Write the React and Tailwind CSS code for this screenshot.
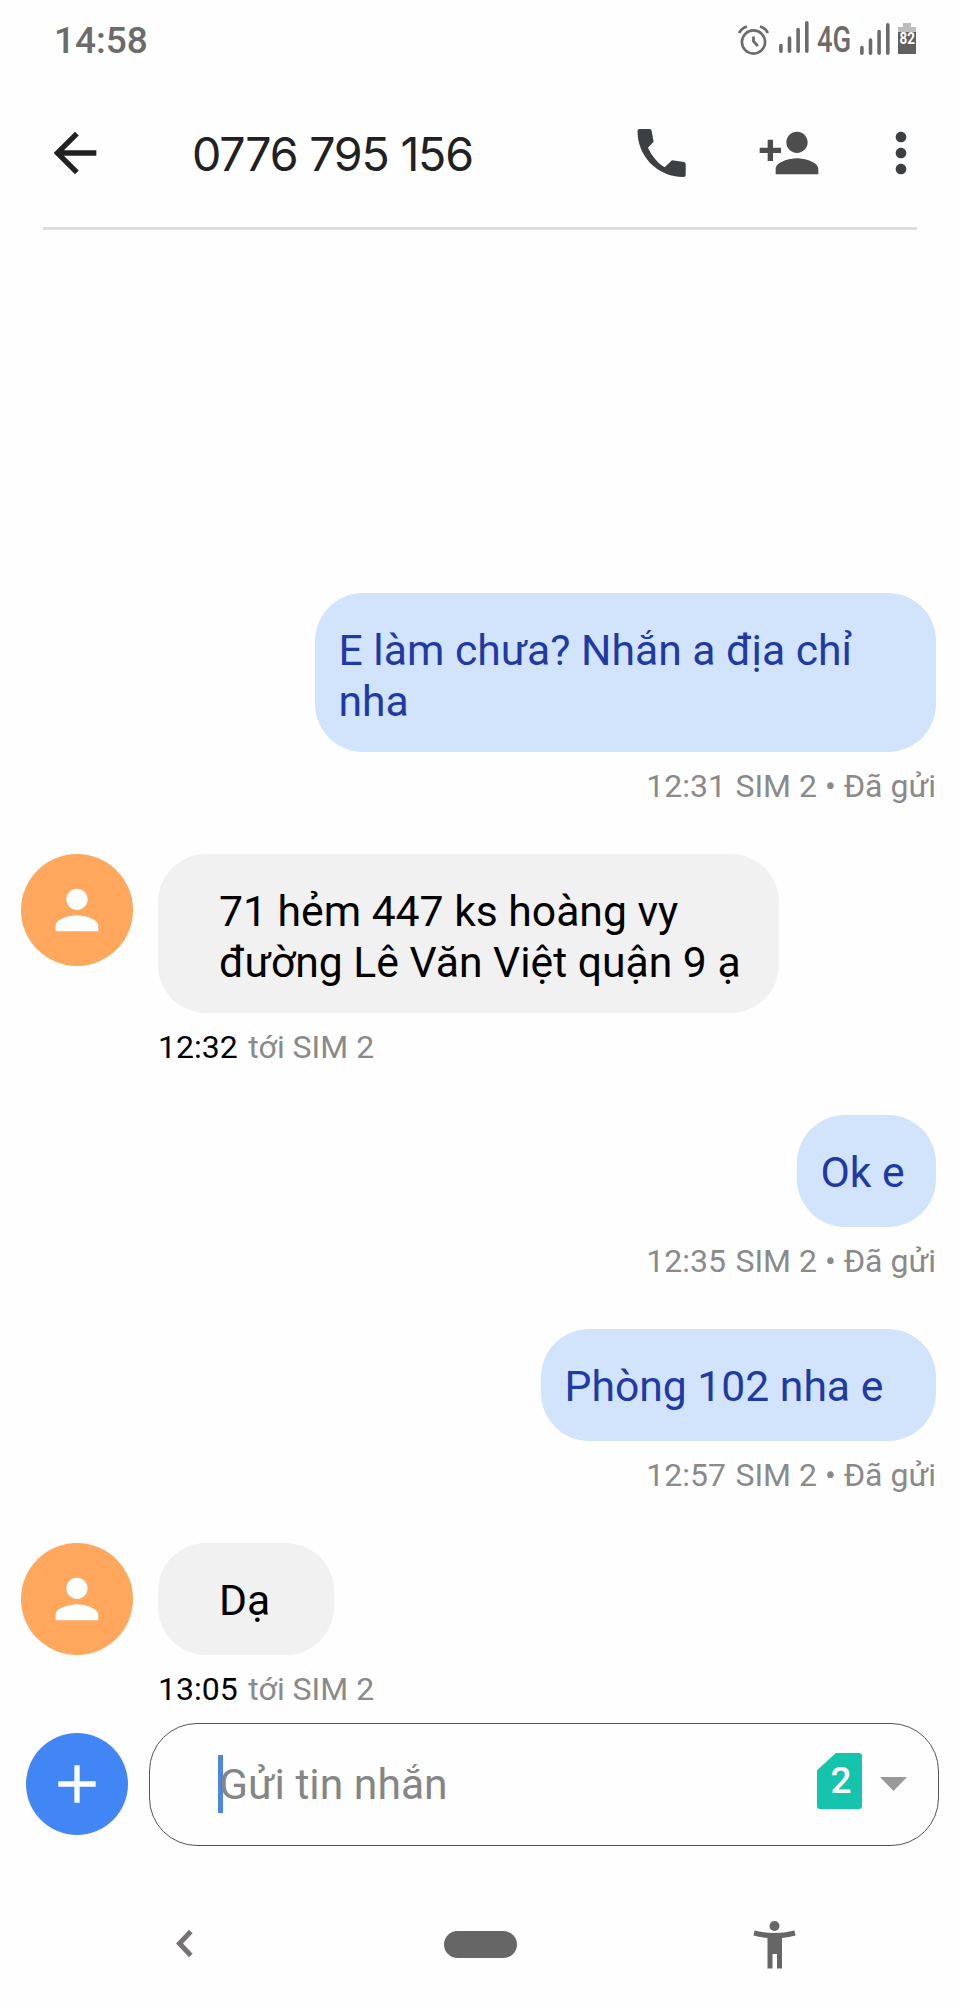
import { useState } from "react";
import { MdAdd, MdArrowBack, MdMoreVert, MdPerson, MdPersonAdd } from "react-icons/md";

const messages = [
  { id: 1, sent: true, lines: ["E làm chưa? Nhắn a địa chỉ", "nha"], time: "12:31", box: "w-[621px] h-[159px]" },
  { id: 2, sent: false, lines: ["71 hẻm 447 ks hoàng vy", "đường Lê Văn Việt quận 9 ạ"], time: "12:32", box: "w-[621px] h-[159px]" },
  { id: 3, sent: true, lines: ["Ok e"], time: "12:35", box: "w-[139px] h-28" },
  { id: 4, sent: true, lines: ["Phòng 102 nha e"], time: "12:57", box: "w-[395px] h-28" },
  { id: 5, sent: false, lines: ["Dạ"], time: "13:05", box: "w-[176px] h-28" },
];

const AlarmIcon = () => (
  <svg className="h-[30px] w-[31px]" viewBox="0 0 31 30" fill="none" stroke="#6b6b6b">
    <circle cx="15.500" cy="17" r="11.600" strokeWidth="2.600" />
    <path d="M15.500 11.500v4.800l4.300 4.800" strokeWidth="2.800" />
    <path d="M1.200 8C2.500 5 5.500 2.500 9 1.500M29.800 8C28.500 5 25.500 2.500 22 1.500" strokeWidth="2.800" />
  </svg>
);

const SignalIcon = ({ className }) => (
  <svg className={className} viewBox="0 0 30 32" stroke="#6b6b6b" strokeWidth="3.600" strokeLinecap="round">
    <path d="M1.900 24.500v5.700M10.500 17v13.200M19.100 8.500v21.700M27.800 1.900v28.300" />
  </svg>
);

const PhoneIcon = () => (
  <svg className="h-[49px] w-[49px]" viewBox="0 0 49 49" fill="#3c4043">
    <path d="M.5 2Q.5 0 2.500 0H12.500Q14.500 0 14.700 2L16.600 12.800L11 18.700C15 27 20 33.500 27.700 38.300L35 31.300L47 33Q48.700 33.300 48.700 35.500V46Q48.700 48 46.500 48C20 48 .5 27 .5 2Z" />
  </svg>
);

const StatusBar = () => (
  <div className="flex h-20 justify-between pr-11 pl-[54px]">
    <div className="mt-[19px] text-[37px] leading-[44px] font-medium text-[#6b6b6b]">14:58</div>
    <div className="flex items-start text-[#6b6b6b]">
      <div className="mt-[25px] mr-2.5">
        <AlarmIcon />
      </div>
      <SignalIcon className="mt-[21px] h-8 w-[30px]" />
      <div className="mt-[18px] ml-2 w-[43px] text-[37px] leading-[44px] font-medium">
        <span className="inline-block origin-left scale-x-[0.74]">4G</span>
      </div>
      <SignalIcon className="mt-[23px] h-8 w-[30px]" />
      <div className="mt-[23px] ml-2 flex flex-col items-center">
        <div className="h-1 w-2 bg-[#bdbdbd]" />
        <div className="flex h-[27px] w-[18px] justify-center border-t-[5px] border-[#bdbdbd] bg-[#606060]">
          <span className="scale-x-[0.84] text-[16px] leading-[14px] font-bold text-white">82</span>
        </div>
      </div>
    </div>
  </div>
);

const Message = ({ message }) => {
  const { sent, lines, time, box } = message;

  return (
    <li className={sent ? "flex pr-6" : "flex pl-[21px]"}>
      {!sent && (
        <div className="mr-[25px] flex size-28 shrink-0 items-center justify-center rounded-full bg-[#ffa75c]">
          <MdPerson className="size-16 text-white" />
        </div>
      )}
      <div className={sent ? "ml-auto flex flex-col items-end" : ""}>
        <div
          className={`${box} rounded-[48px] pt-8 text-[42.67px] leading-[50.5px] whitespace-nowrap ${
            sent ? "bg-[#d2e3fc] pl-[23.5px] text-[#1f3aa5]" : "bg-[#f1f1f1] pl-[61px] text-black"
          }`}
        >
          {lines.map((line) => (
            <p key={line}>{line}</p>
          ))}
        </div>
        <p className="mt-[15px] h-[87px] text-[32px] leading-[38px] text-[#8a8a8a]">
          <span className={sent ? "mr-[1.5px]" : "mr-[2.5px] text-black"}>{time}</span>
          {sent ? " SIM 2 • Đã gửi" : " tới SIM 2"}
        </p>
      </div>
    </li>
  );
};

const ComposeBar = () => {
  const [content, setContent] = useState("");

  return (
    <footer className="flex h-[124px] items-center pr-[21px] pl-[26px]">
      <button className="flex size-[102px] items-center justify-center rounded-full bg-[#4285f4]">
        <MdAdd className="size-16 text-white" />
      </button>
      <div className="ml-[21px] flex h-[123px] flex-1 items-center rounded-[48px] border border-[#555] pl-[68px]">
        <div className="h-[58px] w-[4.5px] bg-[#4c86e8]" />
        <input
          className="-ml-[3.5px] h-[58px] w-[500px] bg-transparent pt-0.5 text-[42.67px] text-black outline-none placeholder:text-[#858585]"
          placeholder="Gửi tin nhắn"
          value={content}
          onChange={(e) => setContent(e.target.value)}
        />
        {/* SIM selector */}
        <div className="mr-[31px] ml-auto flex items-center">
          <div className="mb-1.5 flex h-14 w-[45px] items-center justify-center rounded-[3px] bg-[#14c4ac] pl-[3px] text-[37px] leading-[56px] font-medium text-white [clip-path:polygon(42%_0,100%_0,100%_100%,0_100%,0_31%)]">
            2
          </div>
          <svg className="ml-[18px] h-3.5 w-[27px]" viewBox="0 0 27 14" fill="#999">
            <path d="M0 0h27L13.500 14z" />
          </svg>
        </div>
      </div>
    </footer>
  );
};

const NavBar = () => (
  <nav className="flex h-[162px] items-start justify-between pt-[75px] pr-[164px] pl-[176px]">
    <svg className="mt-[9px] h-[27px] w-[17px]" viewBox="0 0 17 27" fill="none" stroke="#777272" strokeWidth="5">
      <path d="M14.800 1.500L3.500 13.500l11.300 12" />
    </svg>
    <div className="mt-2.5 ml-[15px] h-[27px] w-[73px] rounded-full bg-[#666]" />
    <svg className="h-[48px] w-[43px]" viewBox="0 0 43 48" fill="#666">
      <circle cx="21.500" cy="5" r="5" />
      <path d="M1.500 9.500Q21.500 14.500 41.500 9.500L42.500 14.500Q36 16.300 29 17V47.500H24V33H19.500V47.500H14.500V17Q7 16.300.5 14.500Z" />
    </svg>
  </nav>
);

export default function App() {
  return (
    <div className="flex h-[2008px] w-[960px] flex-col overflow-hidden bg-[#fefefe] font-[Roboto,sans-serif]">
      <StatusBar />
      <header className="mx-[43px] flex h-[150px] items-start border-b-[3px] border-[#dedede] pt-[41px]">
        <MdArrowBack className="size-16 text-[#212121]" />
        <h1 className="ml-[85px] font-[Inter,sans-serif] text-[46.5px] leading-[66px] font-normal tracking-[-1.2px] whitespace-nowrap text-[#212121]">
          0776 795 156
        </h1>
        <div className="-mr-4 ml-auto flex items-start text-[#3c4043]">
          <div className="mt-2 mr-[71px]">
            <PhoneIcon />
          </div>
          <MdPersonAdd className="mr-12 size-16 text-[#4d4d4d]" />
          <MdMoreVert className="size-16" />
        </div>
      </header>
      <ul className="mt-[363px] h-[1129px]">
        {messages.map((message) => (
          <Message key={message.id} message={message} />
        ))}
      </ul>
      <ComposeBar />
      <NavBar />
    </div>
  );
}
